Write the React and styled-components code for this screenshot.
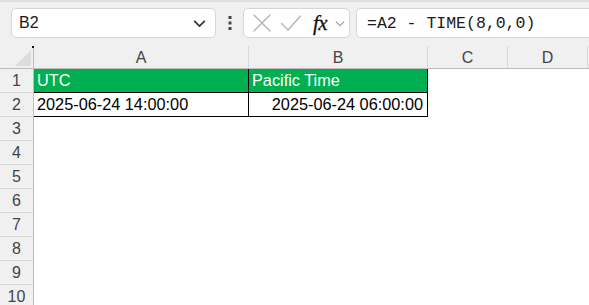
import React from 'react'
import styled, { createGlobalStyle } from 'styled-components'

const Global = createGlobalStyle`
  html, body { margin: 0; padding: 0; background: #fff; }
  body { font-family: "Liberation Sans", Arial, sans-serif; overflow: hidden; }
`

const Chevron = ({ size = 14, color = '#333', width = 1.6 }) => (
  <svg width={size} height={size} viewBox="0 0 14 14" fill="none">
    <path d="M2.5 5 L7 9.5 L11.5 5" stroke={color} strokeWidth={width} strokeLinecap="round" strokeLinejoin="round" />
  </svg>
)

const Cross = () => (
  <svg width="20" height="20" viewBox="0 0 20 20" fill="none">
    <path d="M2 2 L18 18 M18 2 L2 18" stroke="#b4b4b4" strokeWidth="1.4" strokeLinecap="round" />
  </svg>
)

const Tick = () => (
  <svg width="22" height="18" viewBox="0 0 22 18" fill="none">
    <path d="M1.5 9.5 L8 16 L20.5 2" stroke="#b4b4b4" strokeWidth="1.4" strokeLinecap="round" strokeLinejoin="round" />
  </svg>
)

const Kebab = () => (
  <svg width="4" height="14" viewBox="0 0 4 14">
    <rect x="0.5" y="0" width="3" height="3" fill="#444" />
    <rect x="0.5" y="5.5" width="3" height="3" fill="#444" />
    <rect x="0.5" y="11" width="3" height="3" fill="#444" />
  </svg>
)

const Page = styled.div`
  width: 589px;
  height: 305px;
  background: #f0f0f0;
  display: flex;
  flex-direction: column;
  overflow: hidden;
`

const Toolbar = styled.div`
  height: 46px;
  flex: none;
  box-sizing: border-box;
  border-top: 2px solid #e0e0e0;
  padding: 6px 0 0 11px;
  display: flex;
  align-items: flex-start;
`

const Box = styled.div`
  box-sizing: border-box;
  height: 30px;
  background: #fff;
  border: 1px solid #d6d6d6;
  border-radius: 5px;
  display: flex;
  align-items: center;
`

const NameBox = styled(Box)`
  width: 205px;
  padding: 0 8px 0 7px;
  justify-content: space-between;
  font-size: 16px;
  color: #1a1a1a;
`

const Dots = styled.div`
  width: 27px;
  height: 30px;
  display: flex;
  align-items: center;
  justify-content: center;
`

const IconBox = styled(Box)`
  width: 107px;
  padding: 0 0 0 4px;
`

const IconSlot = styled.span`
  width: ${p => p.$w}px;
  display: flex;
  align-items: center;
  justify-content: center;
`

const Fx = styled.span`
  font-family: "Liberation Serif", "Times New Roman", serif;
  font-style: italic;
  font-size: 21px;
  color: #111;
  letter-spacing: -0.5px;
  line-height: 1;
  -webkit-text-stroke: 0.3px #111;
`

const FormulaBox = styled(Box)`
  flex: 1;
  margin-left: 6px;
  border-right: none;
  border-radius: 5px 0 0 5px;
  padding-left: 10px;
  font-family: "Liberation Mono", "Courier New", monospace;
  font-size: 16.5px;
  color: #1a1a1a;
`

const Sheet = styled.div`
  flex: 1;
  display: grid;
  grid-template-columns: 34px 215px 179px 80px 80px 1fr;
  grid-template-rows: 23px repeat(10, 24px);
  background: #fff;
`

const Corner = styled.div`
  background: #f0f0f0;
  border-right: 1px solid #bdbdbd;
  border-bottom: 1px solid #bdbdbd;
  position: relative;
  &::before {
    content: '';
    position: absolute;
    right: 2px;
    bottom: 2px;
    width: 0;
    height: 0;
    border-left: 16px solid transparent;
    border-bottom: 16px solid #dcdcdc;
  }
  &::after {
    content: '';
    position: absolute;
    right: -1px;
    top: 0;
    width: 2px;
    height: 2px;
    background: #111;
  }
`

const ColHead = styled.div`
  background: #f0f0f0;
  border-right: 1px solid #d8d8d8;
  border-bottom: 1px solid #bdbdbd;
  display: flex;
  align-items: center;
  justify-content: center;
  font-size: 16px;
  color: #444;
  padding-top: 1px;
`

const RowHead = styled.div`
  background: #f0f0f0;
  border-right: 1px solid #bdbdbd;
  border-bottom: 1px solid #d8d8d8;
  display: flex;
  align-items: center;
  justify-content: center;
  font-size: 16px;
  color: #444;
`

const Cell = styled.div`
  box-sizing: border-box;
  display: flex;
  align-items: center;
  justify-content: ${p => (p.$right ? 'flex-end' : 'flex-start')};
  padding: 0 4px 0 3px;
  font-size: 16.3px;
  white-space: nowrap;
  background: ${p => (p.$head ? '#00b050' : '#fff')};
  color: ${p => (p.$head ? '#fff' : '#000')};
  border-right: ${p => (p.$edge ? '1px solid #000' : 'none')};
  border-bottom: ${p => (p.$edge ? '1px solid #000' : 'none')};
`

const columns = ['A', 'B', 'C', 'D', '']

export default function App() {
  const rows = [
    [
      { text: 'UTC', head: true, edge: true },
      { text: 'Pacific Time', head: true, edge: true },
    ],
    [
      { text: '2025-06-24 14:00:00', edge: true },
      { text: '2025-06-24 06:00:00', edge: true, right: true },
    ],
  ]
  return (
    <Page>
      <Global />
      <Toolbar>
        <NameBox>
          <span>B2</span>
          <Chevron size={15} />
        </NameBox>
        <Dots><Kebab /></Dots>
        <IconBox>
          <IconSlot $w={28}><Cross /></IconSlot>
          <IconSlot $w={30}><Tick /></IconSlot>
          <IconSlot $w={28}><Fx>fx</Fx></IconSlot>
          <IconSlot $w={12}><Chevron size={13} color="#999" width={1.2} /></IconSlot>
        </IconBox>
        <FormulaBox>=A2 - TIME(8,0,0)</FormulaBox>
      </Toolbar>
      <Sheet>
        <Corner />
        {columns.map((c, i) => (
          <ColHead key={i}>{c}</ColHead>
        ))}
        {Array.from({ length: 10 }, (_, r) => (
          <React.Fragment key={r}>
            <RowHead>{r + 1}</RowHead>
            {[0, 1, 2, 3, 4].map(c => {
              const d = rows[r] && rows[r][c]
              return d ? (
                <Cell key={c} $head={d.head} $edge={d.edge} $right={d.right}>{d.text}</Cell>
              ) : (
                <Cell key={c} />
              )
            })}
          </React.Fragment>
        ))}
      </Sheet>
    </Page>
  )
}
